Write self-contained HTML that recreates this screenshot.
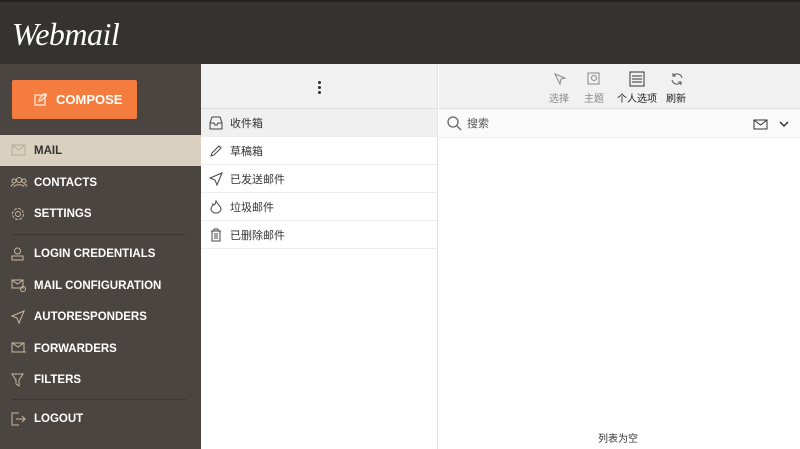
<!DOCTYPE html>
<html><head><meta charset="utf-8"><style>
*{margin:0;padding:0;box-sizing:border-box}
body{width:800px;height:449px;overflow:hidden;font-family:"Liberation Sans","Noto Sans CJK SC",sans-serif;background:#fff;position:relative}
.hdr{position:absolute;left:0;top:0;width:800px;height:64px;background:#363230;border-top:2px solid #222}
.logo{position:absolute;left:12px;top:14px;color:#fff;font-family:"Liberation Serif",serif;font-style:italic;font-size:32px;letter-spacing:-0.5px}
.side{position:absolute;left:0;top:64px;width:201px;height:385px;background:#4a4541}
.btn{position:absolute;left:12px;top:16px;width:125px;height:39px;background:#f47c3f;border-radius:2px;color:#fff;font-weight:bold;font-size:13px;line-height:39px;padding-left:22px}
.item{position:absolute;left:0;width:201px;height:31px;color:#fff;font-weight:bold;font-size:11.5px;line-height:32px;padding-left:34px}
.item svg{position:absolute;left:11px;top:9px}
.sel{background:#d9d0c0;color:#333}
.sep{position:absolute;left:12px;width:174px;border-top:1px solid #3a3633}
.mid{position:absolute;left:201px;top:64px;width:237px;height:385px;background:#fff;border-right:1px solid #e2e2e2}
.tb{position:absolute;left:0;top:0;width:100%;height:45px;background:#f1f1f1;border-bottom:1px solid #e0e0e0}
.f{position:absolute;left:0;width:236px;height:28px;border-bottom:1px solid #eee;font-size:11px;line-height:30px;padding-left:29px;color:#333}
.f svg{position:absolute;left:8px;top:7px}
.rt{position:absolute;left:439px;top:64px;width:361px;height:385px}
.rtb{position:absolute;left:0;top:0;width:100%;height:45px;background:#f1f1f1;border-bottom:1px solid #e0e0e0}
.tl{position:absolute;top:26px;font-size:10px;color:#888}
.srch{position:absolute;left:0;top:45px;width:100%;height:29px;background:#fafafa;border-bottom:1px solid #eee;font-size:11px;color:#555;line-height:30px;padding-left:28px}
</style></head><body>
<div class="hdr"><div class="logo">Webmail</div></div>
<div class="side">
<div class="btn"><svg width="13" height="13" style="position:absolute;left:22px;top:13px" fill="none" stroke="#fde3d2" stroke-width="1.3"><rect x="1" y="2" width="10" height="10"/><path d="M5 8l1-3 5-5 2 2-5 5z"/></svg><span style="margin-left:22px">COMPOSE</span></div>
<div class="item sel" style="top:71px"><svg width="15" height="12" fill="none" stroke="#b8a995"><rect x="1" y="1" width="13" height="10"/><path d="M1 1l6.5 5 6.5-5"/></svg>MAIL</div>
<div class="item" style="top:103px"><svg width="16" height="12" fill="none" stroke="#c9b8a0"><circle cx="8" cy="4" r="2.5"/><circle cx="3" cy="5" r="2"/><circle cx="13" cy="5" r="2"/><path d="M3 11c0-3 10-3 10 0M0 11c0-2 2-3 3-3M16 11c0-2-2-3-3-3"/></svg>CONTACTS</div>
<div class="item" style="top:134px"><svg width="14" height="14" fill="none" stroke="#c9b8a0"><circle cx="7" cy="7" r="2.5"/><circle cx="7" cy="7" r="5.5" stroke-dasharray="3 1.3"/></svg>SETTINGS</div>
<div class="sep" style="top:170px"></div>
<div class="item" style="top:174px"><svg width="13" height="14" fill="none" stroke="#c9b8a0"><circle cx="6.5" cy="4" r="3"/><rect x="1" y="9" width="11" height="4"/></svg>LOGIN CREDENTIALS</div>
<div class="item" style="top:206px"><svg width="16" height="14" fill="none" stroke="#c9b8a0"><rect x="1" y="1" width="11" height="8"/><path d="M1 1l5.5 4 5.5-4"/><circle cx="12" cy="10" r="2.5"/></svg>MAIL CONFIGURATION</div>
<div class="item" style="top:237px"><svg width="14" height="14" fill="none" stroke="#c9b8a0"><path d="M13 1L1 6l5 2 2 5z"/></svg>AUTORESPONDERS</div>
<div class="item" style="top:269px"><svg width="16" height="13" fill="none" stroke="#c9b8a0"><rect x="1" y="1" width="12" height="9"/><path d="M1 1l6 4 6-4M10 10h5"/></svg>FORWARDERS</div>
<div class="item" style="top:300px"><svg width="13" height="14" fill="none" stroke="#c9b8a0"><path d="M1 1h11L8 7v6L5 11V7z"/></svg>FILTERS</div>
<div class="sep" style="top:335px"></div>
<div class="item" style="top:339px"><svg width="15" height="14" fill="none" stroke="#c9b8a0"><path d="M8 1H1v12h7M5 7h9M11 4l3 3-3 3"/></svg>LOGOUT</div>
</div>
<div class="mid">
<div class="tb"><div style="position:absolute;left:117px;top:16px;width:3px;height:14px;background:radial-gradient(circle,#333 1.4px,transparent 1.6px) 0 0/3px 5px"></div></div>
<div class="f" style="top:45px;background:#f0f0f0"><svg width="14" height="14" fill="none" stroke="#444"><path d="M1 7l2-6h8l2 6v6H1zM1 7h4l1 2h2l1-2h4"/></svg>收件箱</div>
<div class="f" style="top:73px"><svg width="14" height="14" fill="none" stroke="#444"><path d="M2 12l1-3 7-7 2 2-7 7z"/></svg>草稿箱</div>
<div class="f" style="top:101px"><svg width="14" height="14" fill="none" stroke="#444"><path d="M13 1L1 6l5 2 2 5z"/></svg>已发送邮件</div>
<div class="f" style="top:129px"><svg width="14" height="14" fill="none" stroke="#444"><path d="M7 1c1 3 5 5 5 8a5 4 0 01-10 0c0-2 2-3 2-5 1 1 2 2 3-3z"/></svg>垃圾邮件</div>
<div class="f" style="top:157px"><svg width="14" height="14" fill="none" stroke="#444"><path d="M2 3h10M5 3V1h4v2M3 3v10h8V3M6 5v6M8 5v6"/></svg>已删除邮件</div>
</div>
<div class="rt">
<div class="rtb">
<svg width="14" height="14" style="position:absolute;left:114px;top:8px" fill="none" stroke="#888"><path d="M2 2l10 4-4 1-1 5z"/></svg>
<svg width="14" height="14" style="position:absolute;left:148px;top:8px" fill="none" stroke="#888"><rect x="1" y="1" width="11" height="11"/><circle cx="7" cy="6" r="2.5"/></svg>
<svg width="16" height="16" style="position:absolute;left:190px;top:7px" fill="none" stroke="#333"><rect x="1" y="1" width="14" height="14"/><path d="M3 5h10M3 8h10M3 11h10"/></svg>
<svg width="14" height="14" style="position:absolute;left:231px;top:8px" fill="none" stroke="#555"><path d="M12 6A5 5 0 003 4M2 8a5 5 0 009 2M3 1v3h3M11 13v-3H8"/></svg>
<div class="tl" style="left:110px">选择</div><div class="tl" style="left:145px">主题</div><div class="tl" style="left:178px;color:#222">个人选项</div><div class="tl" style="left:227px;color:#222">刷新</div>
</div>
<div class="srch"><svg width="15" height="15" style="position:absolute;left:8px;top:7px" fill="none" stroke="#666" stroke-width="1.3"><circle cx="6" cy="6" r="5"/><path d="M10 10l4 4"/></svg>搜索
<svg width="15" height="11" style="position:absolute;left:314px;top:10px" fill="none" stroke="#333"><rect x="1" y="1" width="13" height="9"/><path d="M1 1l6.5 5 6.5-5"/></svg>
<svg width="10" height="7" style="position:absolute;left:340px;top:12px" fill="none" stroke="#333" stroke-width="1.5"><path d="M1 1l4 4 4-4"/></svg></div>
<div style="position:absolute;left:0;width:358px;top:366px;text-align:center;font-size:10px;color:#333">列表为空</div>
</div>
</body></html>
